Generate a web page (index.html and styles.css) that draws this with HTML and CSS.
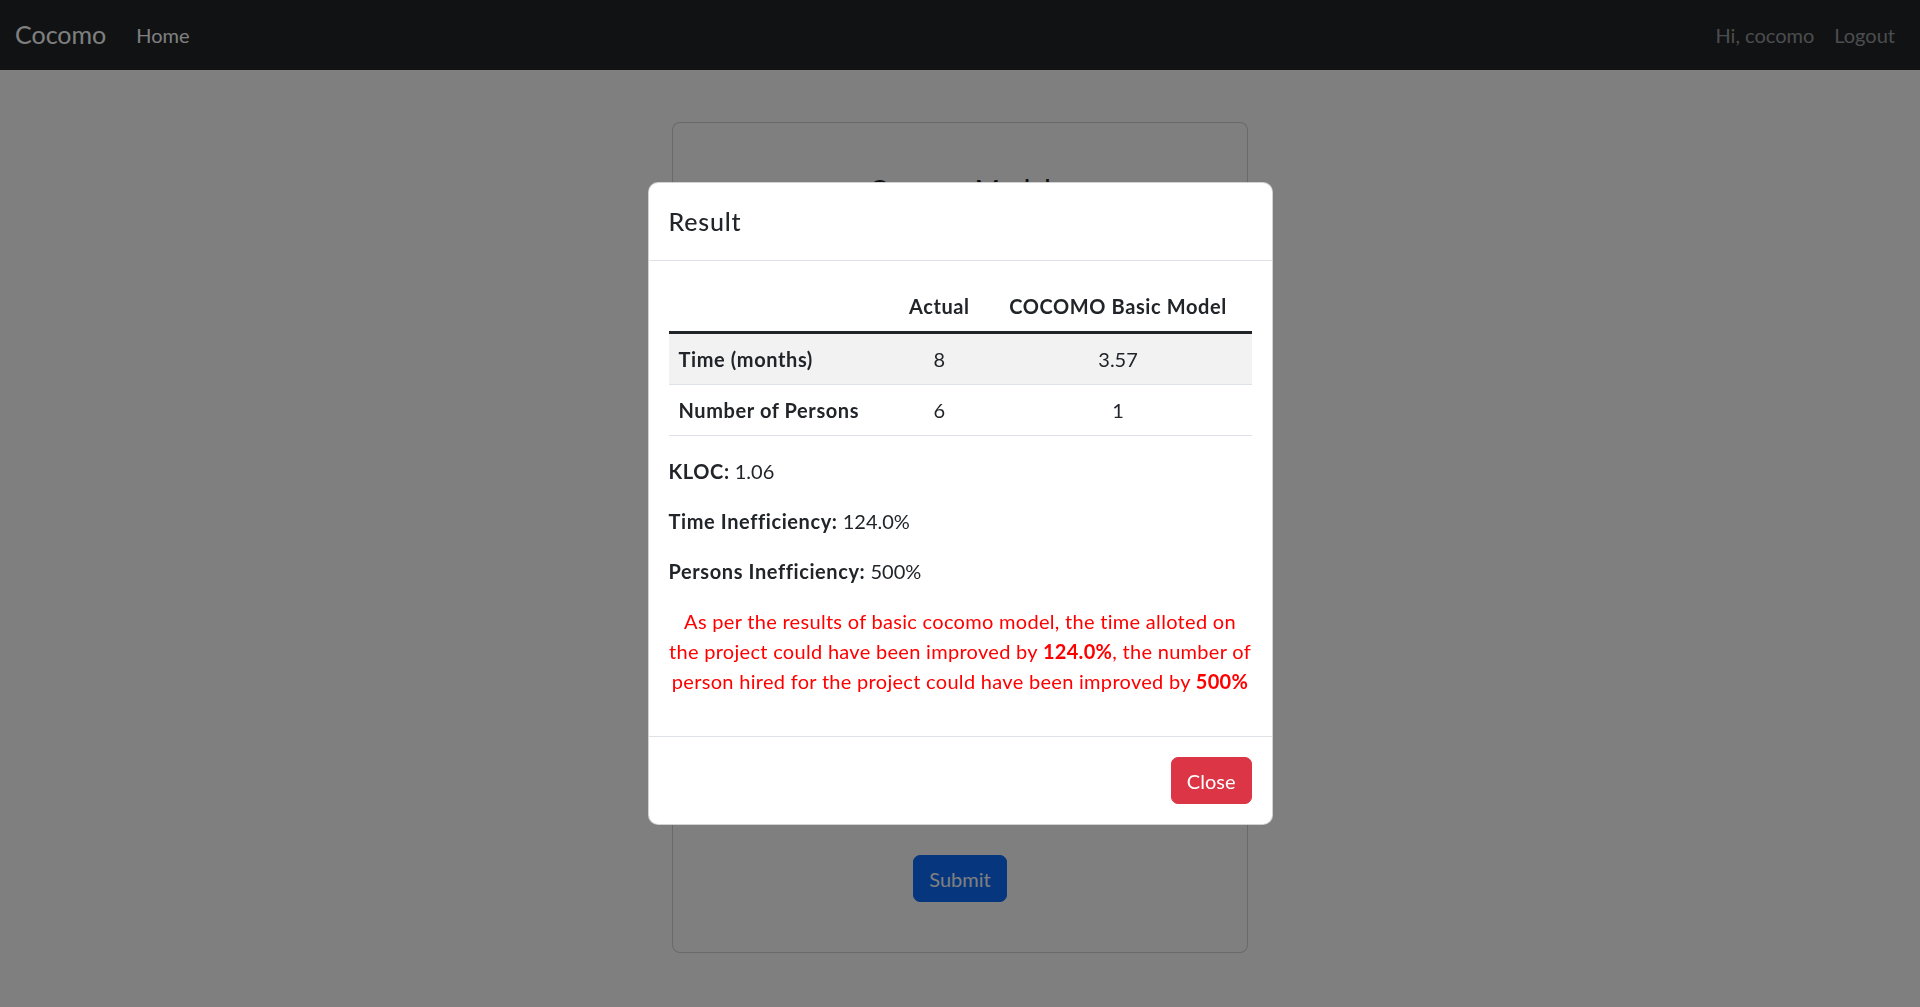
FILE: index.html
```html
<!DOCTYPE html>
<html lang="en">
<head>
<meta charset="utf-8">
<title>Cocomo</title>
<link rel="stylesheet" href="styles.css">
</head>
<body>
<nav class="navbar">
  <div class="nav-group">
    <a class="brand" href="#">Cocomo</a>
    <a class="nav-link active" href="#">Home</a>
  </div>
  <div class="nav-group">
    <span class="nav-link">Hi, cocomo</span>
    <a class="nav-link" href="#">Logout</a>
  </div>
</nav>

<main class="page">
  <div class="card">
    <h4 class="card-title">Cocomo Model</h4>
    <form class="form">
      <div class="field"><label>Project Name</label><input type="text"></div>
      <div class="field"><label>Lines of Code</label><input type="text"></div>
      <div class="field"><label>Project Type</label><input type="text"></div>
      <div class="field"><label>Actual Time (months)</label><input type="text"></div>
      <div class="field"><label>Number of Persons</label><input type="text"></div>
      <div class="field"><label>Start Date</label><input type="text"></div>
      <div class="submit-row"><button type="button" class="btn btn-primary">Submit</button></div>
    </form>
  </div>
</main>

<div class="backdrop"></div>

<div class="modal">
  <div class="modal-content">
    <div class="modal-header">
      <h5 class="modal-title">Result</h5>
    </div>
    <div class="modal-body">
      <table class="result-table">
        <thead>
          <tr><th></th><th class="c">Actual</th><th class="c">COCOMO Basic Model</th></tr>
        </thead>
        <tbody>
          <tr class="striped"><th>Time (months)</th><td class="c">8</td><td class="c">3.57</td></tr>
          <tr><th>Number of Persons</th><td class="c">6</td><td class="c">1</td></tr>
        </tbody>
      </table>
      <p><b>KLOC:</b> 1.06</p>
      <p><b>Time Inefficiency:</b> 124.0%</p>
      <p><b>Persons Inefficiency:</b> 500%</p>
      <p class="verdict">As per the results of basic cocomo model, the time alloted on the project could have been improved by <b>124.0%</b>, the number of person hired for the project could have been improved by <b>500%</b></p>
    </div>
    <div class="modal-footer">
      <button type="button" class="btn btn-danger">Close</button>
    </div>
  </div>
</div>
</body>
</html>
```
FILE: styles.css
```css
* { box-sizing: border-box; }

html, body {
  margin: 0;
  padding: 0;
}

body {
  background: #ffffff;
  color: #212529;
  font-family: Lato, "Open Sans", sans-serif;
  font-size: 20px;
  line-height: 1.5;
  min-height: 1007px;
}

a { text-decoration: none; }

b { letter-spacing: 0.6px; }

/* Navbar */
.navbar {
  height: 70px;
  background: #212529;
  padding: 10px 15px;
  display: flex;
  align-items: center;
  justify-content: space-between;
}

.nav-group {
  display: flex;
  align-items: center;
}

.brand {
  color: #ffffff;
  font-size: 25px;
  line-height: 37.5px;
  padding: 6px 0;
  margin-right: 20px;
}

.nav-link {
  color: rgba(255, 255, 255, 0.55);
  font-size: 20px;
  line-height: 30px;
  padding: 10px 10px;
}

.nav-link.active {
  color: #ffffff;
}

/* Background page */
.page {
  display: flex;
  justify-content: center;
  padding-top: 52px;
}

.card {
  width: 576px;
  border: 1px solid rgba(0, 0, 0, 0.175);
  border-radius: 8px;
  padding: 48px 40px 50px;
  background: #ffffff;
}

.card-title {
  margin: 0 0 20px;
  font-size: 27px;
  font-weight: 500;
  line-height: 36px;
  text-align: center;
}

.field {
  margin-bottom: 20px;
}

.field label {
  display: block;
  line-height: 30px;
  margin-bottom: 5px;
}

.field input {
  display: block;
  width: 100%;
  height: 47px;
  border: 1px solid #dee2e6;
  border-radius: 7px;
  font: inherit;
}

.submit-row {
  padding-top: 16px;
  text-align: center;
}

.btn {
  font-family: inherit;
  font-size: 20px;
  line-height: 30px;
  padding: 7.5px 15px;
  border: 1px solid transparent;
  border-radius: 7px;
  color: #ffffff;
  cursor: pointer;
}

.btn-primary {
  background: #0d6efd;
  border-color: #0d6efd;
}

.btn-danger {
  background: #dc3545;
  border-color: #dc3545;
  margin: 5px;
}

/* Backdrop + modal */
.backdrop {
  position: fixed;
  inset: 0;
  background: rgba(0, 0, 0, 0.5);
}

.modal {
  position: fixed;
  inset: 0;
  display: flex;
  align-items: center;
  justify-content: center;
}

.modal-content {
  width: 625px;
  background: #ffffff;
  border: 1px solid rgba(0, 0, 0, 0.175);
  border-radius: 10px;
}

.modal-header {
  padding: 20px;
  border-bottom: 1px solid #dee2e6;
}

.modal-title {
  margin: 0;
  font-size: 25px;
  font-weight: 500;
  line-height: 37.5px;
  letter-spacing: 0.8px;
}

.modal-body {
  padding: 20px;
}

.result-table {
  width: 100%;
  border-collapse: separate;
  border-spacing: 0;
  margin-bottom: 20px;
}

.result-table th,
.result-table td {
  padding: 10px;
  line-height: 30px;
  text-align: left;
  font-weight: 400;
}

.result-table th {
  font-weight: 700;
  letter-spacing: 0.6px;
}

.result-table .c {
  text-align: center;
}

.result-table thead th {
  border-bottom: 3px solid #212529;
}

.result-table tbody th,
.result-table tbody td {
  border-bottom: 1px solid #dee2e6;
}

.result-table tr.striped > * {
  background: #f2f2f2;
}

.modal-body p {
  margin: 0 0 20px;
}

.modal-body .verdict {
  color: #ff0000;
  text-align: center;
  letter-spacing: 0.3px;
}

.modal-body .verdict b {
  letter-spacing: 0.3px;
}

.modal-footer {
  padding: 15px;
  border-top: 1px solid #dee2e6;
  display: flex;
  justify-content: flex-end;
}
```
